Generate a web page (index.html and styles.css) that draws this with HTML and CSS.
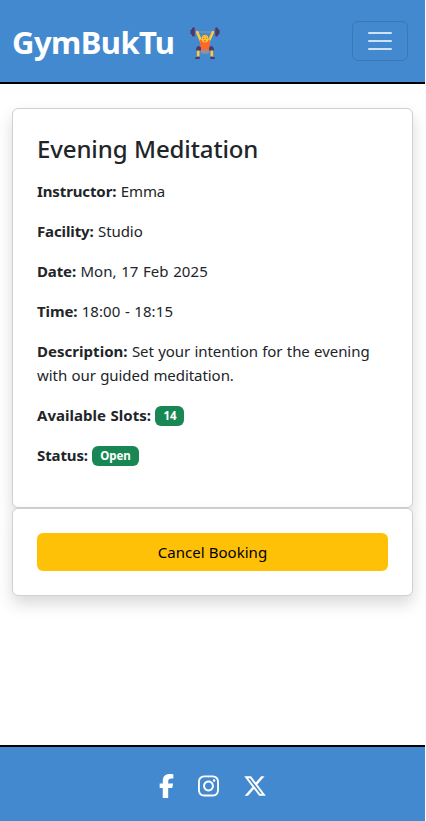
FILE: index.html
```html
<!DOCTYPE html>
<html lang="en">
<head>
<meta charset="utf-8">
<title>GymBukTu</title>
<link rel="stylesheet" href="styles.css">
</head>
<body>
<header class="navbar">
  <a class="brand"><span class="brand-name">GymBukTu</span>
    <svg class="lifter" viewBox="0 0 30 32" aria-hidden="true">
      <path d="M6 5h18" stroke="#8496ad" stroke-width="1.3"/>
      <g fill="#533566"><rect x="0.5" y="2.500" width="2" height="5" rx=".8"/><rect x="2" y="0.500" width="2.800" height="9" rx="1"/><rect x="25.200" y="0.500" width="2.800" height="9" rx="1"/><rect x="27.500" y="2.500" width="2" height="5" rx=".8"/></g>
      <path d="M7.200 5.200L11.500 15M22.800 5.200L18.500 15" fill="none" stroke="#ffc83d" stroke-width="2.600" stroke-linecap="round"/>
      <path d="M10 12.500q5 2 10 0l-.8 10.500h-8.500z" fill="#ff6723"/>
      <path d="M10.500 22.500h9v2.500l-2 1.700h-5l-2-1.700z" fill="#998e9a"/>
      <circle cx="15" cy="12" r="3.400" fill="#ffc83d"/>
      <path d="M11.700 10.800q.3-3 3.300-3t3.300 3q-3.300-1.500-6.600 0z" fill="#fab52c"/>
      <path d="M13.200 11.600h1M15.900 11.600h1M13.800 13.900h2.400" stroke="#a75a2d" stroke-width=".9"/>
      <path d="M8.200 23v6.500M21.800 23v6.500" stroke="#ffc83d" stroke-width="2.600"/>
      <path d="M6 23.500q0-4.500 3-4.500l2 1.500v3zM24 23.500q0-4.500-3-4.500l-2 1.500v3zM5 32q0-2.200 3-2.200h1.700v2.200zM25 32q0-2.200-3-2.200h-1.700v2.200z" fill="#533566"/>
    </svg>
  </a>
  <button class="toggler" aria-label="Toggle navigation">
    <svg viewBox="0 0 30 30"><path d="M4 7h22M4 15h22M4 23h22" stroke="#fff" stroke-opacity=".75" stroke-width="2" stroke-linecap="round" stroke-miterlimit="10"/></svg>
  </button>
</header>
<main class="content">
  <section class="card details">
    <h1>Evening Meditation</h1>
    <p><strong>Instructor:</strong> Emma</p>
    <p><strong>Facility:</strong> Studio</p>
    <p><strong>Date:</strong> <span class="numeric">Mon, 17 Feb 2025</span></p>
    <p><strong>Time:</strong> <span class="numeric">18:00 - 18:15</span></p>
    <p><strong class="wide">Description:</strong> <span>Set your intention for the evening</span> <span>with our guided meditation.</span></p>
    <p><strong class="wide">Available Slots:</strong> <span class="badge">14</span></p>
    <p><strong>Status:</strong> <span class="badge">Open</span></p>
  </section>
  <section class="card actions">
    <button class="cancel">Cancel Booking</button>
  </section>
</main>
<footer class="footer">
  <svg class="facebook" viewBox="0 0 320 512"><path d="M80 299.300V512H196V299.300h86.500l18-97.800H196V166.900c0-51.700 20.300-71.500 72.700-71.500c16.300 0 29.400 .4 37 1.200V7.900C291.400 4 256.400 0 236.200 0C129.300 0 80 50.500 80 159.400v42.100H14v97.800H80z"/></svg>
  <svg class="instagram" viewBox="0 0 448 512"><path d="M224.100 141c-63.600 0-114.900 51.300-114.900 114.900s51.300 114.900 114.900 114.900S339 319.500 339 255.900 287.700 141 224.100 141zm0 189.600c-41.100 0-74.700-33.500-74.700-74.700s33.500-74.700 74.700-74.700 74.700 33.500 74.700 74.700-33.600 74.700-74.700 74.700zm146.400-194.300c0 14.900-12 26.800-26.800 26.800-14.900 0-26.800-12-26.800-26.800s12-26.800 26.800-26.800 26.800 12 26.800 26.800zm76.100 27.200c-1.700-35.900-9.900-67.700-36.200-93.900-26.200-26.200-58-34.400-93.900-36.200-37-2.100-147.900-2.100-184.900 0-35.800 1.700-67.600 9.900-93.900 36.100s-34.400 58-36.200 93.900c-2.100 37-2.100 147.900 0 184.900 1.700 35.900 9.900 67.700 36.200 93.900s58 34.400 93.900 36.200c37 2.100 147.900 2.100 184.900 0 35.900-1.700 67.700-9.900 93.900-36.200 26.200-26.200 34.400-58 36.200-93.900 2.100-37 2.100-147.800 0-184.800zM398.800 388c-7.800 19.600-22.900 34.700-42.600 42.600-29.500 11.700-99.500 9-132.100 9s-102.700 2.600-132.100-9c-19.600-7.800-34.700-22.900-42.600-42.600-11.700-29.500-9-99.500-9-132.100s-2.600-102.700 9-132.100c7.800-19.600 22.900-34.700 42.600-42.600 29.500-11.700 99.500-9 132.100-9s102.700-2.600 132.100 9c19.600 7.800 34.700 22.900 42.600 42.600 11.700 29.500 9 99.500 9 132.100s2.700 102.700-9 132.100z"/></svg>
  <svg class="x" viewBox="0 0 512 512"><path d="M389.200 48h70.600L305.600 224.200 487 464H345L233.700 318.600 106.500 464H35.800L200.700 275.500 26.800 48H172.400L272.900 180.900 389.200 48zM364.400 421.800h39.100L151.100 88h-42L364.400 421.800z"/></svg>
</footer>
</body>
</html>
```
FILE: styles.css
```css
* { box-sizing: border-box; }
html { background: #fdfdfd; }
body {
  margin: 0;
  width: 425px;
  height: 821px;
  display: flex;
  flex-direction: column;
  background: #fff;
  color: #212529;
  font: 400 15px/24px "Noto Sans", "Open Sans", sans-serif;
  letter-spacing: -0.06px;
  word-spacing: 0.5px;
}
.navbar {
  height: 84px;
  padding: 0 17px 0 12px;
  display: flex;
  align-items: center;
  justify-content: space-between;
  background: #4389d0;
  border-bottom: 2px solid #000;
}
.brand {
  display: flex;
  align-items: center;
  gap: 16px;
  color: #fff;
  font-size: 31px;
  font-weight: 700;
  line-height: 48px;
  letter-spacing: -0.55px;
}
.brand-name { padding-top: 2px; }
.lifter { width: 30px; height: 32px; margin-top: 4px; }
.toggler {
  width: 56px;
  height: 40px;
  padding: 0;
  display: flex;
  align-items: center;
  justify-content: center;
  background: transparent;
  border: 1px solid #3a77b5;
  border-radius: 6px;
}
.toggler svg { width: 30px; height: 30px; fill: none; }
.content { flex: 1; padding: 24px 12px; }
.card {
  background: #fff;
  border: 1px solid #d0d0d0;
  border-radius: 6px;
  padding: 24px;
  box-shadow: 0 8px 16px rgba(0, 0, 0, 0.15);
}
.details { height: 400px; }
.actions { height: 88px; }
h1 {
  margin: 0;
  padding-bottom: 14px;
  font-size: 24px;
  font-weight: 500;
  line-height: 32px;
  letter-spacing: -0.12px;
}
.card p { margin: 0 0 16px; }
strong { font-weight: 700; letter-spacing: -0.12px; }
.wide { letter-spacing: 0.03px; }
.numeric { letter-spacing: 0.08px; }
.badge {
  display: inline-block;
  padding: 4px 8px;
  border-radius: 6px;
  background: #198754;
  color: #fff;
  font-size: 11.500px;
  font-weight: 700;
  line-height: 12px;
  vertical-align: 1px;
}
.cancel {
  display: block;
  width: 100%;
  height: 38px;
  border: 0;
  border-radius: 6px;
  background: #ffc107;
  color: #000;
  font: inherit;
  letter-spacing: 0.03px;
}
.footer {
  height: 76px;
  display: flex;
  align-items: center;
  justify-content: center;
  gap: 24px;
  padding-top: 4px;
  background: #4389d0;
  border-top: 2px solid #000;
}
.footer svg { height: 24px; fill: #fff; }
.facebook { width: 15px; }
.instagram { width: 21px; }
.x { width: 24px; }
```
